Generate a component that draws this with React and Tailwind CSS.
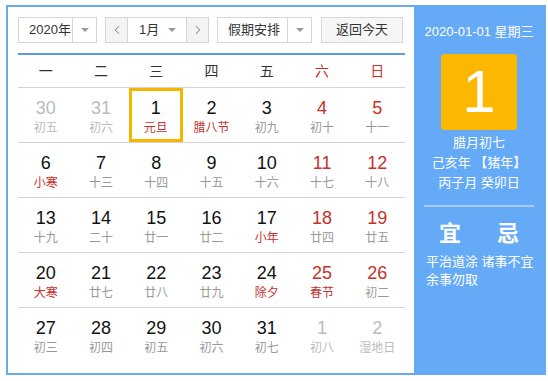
import { ChevronLeft, ChevronRight } from 'lucide-react';

const weeks = [
  [
    { d: 30, l: '初五', other: true },
    { d: 31, l: '初六', other: true },
    { d: 1, l: '元旦', fest: true, sel: true },
    { d: 2, l: '腊八节', fest: true },
    { d: 3, l: '初九' },
    { d: 4, l: '初十' },
    { d: 5, l: '十一' },
  ],
  [
    { d: 6, l: '小寒', fest: true },
    { d: 7, l: '十三' },
    { d: 8, l: '十四' },
    { d: 9, l: '十五' },
    { d: 10, l: '十六' },
    { d: 11, l: '十七' },
    { d: 12, l: '十八' },
  ],
  [
    { d: 13, l: '十九' },
    { d: 14, l: '二十' },
    { d: 15, l: '廿一' },
    { d: 16, l: '廿二' },
    { d: 17, l: '小年', fest: true },
    { d: 18, l: '廿四' },
    { d: 19, l: '廿五' },
  ],
  [
    { d: 20, l: '大寒', fest: true },
    { d: 21, l: '廿七' },
    { d: 22, l: '廿八' },
    { d: 23, l: '廿九' },
    { d: 24, l: '除夕', fest: true },
    { d: 25, l: '春节', fest: true },
    { d: 26, l: '初二' },
  ],
  [
    { d: 27, l: '初三' },
    { d: 28, l: '初四' },
    { d: 29, l: '初五' },
    { d: 30, l: '初六' },
    { d: 31, l: '初七' },
    { d: 1, l: '初八', other: true },
    { d: 2, l: '湿地日', other: true },
  ],
];

const weekdays = ['一', '二', '三', '四', '五', '六', '日'];

function Caret() {
  return (
    <span className="w-0 h-0 border-l-[4px] border-r-[4px] border-t-[4px] border-l-transparent border-r-transparent border-t-[#999]"></span>
  );
}

function DayCell({ day, col }) {
  const weekend = col >= 5;
  let numColor = 'text-[#111]';
  if (day.other) numColor = 'text-[#bbb]';
  else if (weekend) numColor = 'text-[#c9302c]';

  let lunarColor = 'text-[#999]';
  if (day.other) lunarColor = 'text-[#bbb]';
  else if (day.fest) lunarColor = 'text-[#c9302c]';

  return (
    <div
      className={
        'h-[54px] flex flex-col items-center ' +
        (day.sel ? 'border-[3px] border-[#f7b500] pt-[6px] mr-[1px]' : 'pt-[9px]')
      }
    >
      <span className={'text-[18px] leading-[22px] ' + numColor}>{day.d}</span>
      <span className={'text-[12px] leading-[16px] mt-[1px] ' + lunarColor}>{day.l}</span>
    </div>
  );
}

export default function App() {
  return (
    <div className="font-['Liberation_Sans','Noto_Sans_CJK_SC',sans-serif] bg-white w-[548px] h-[381px] pt-[5px] pl-[6px]">
      <div className="w-[540px] h-[370px] border-2 border-[#69a9ef] flex">
        {/* 日历主体 */}
        <div className="w-[406px] pl-[10px] pr-[9px] pt-[10px]">
          <div className="flex items-center h-[26px] text-[13px] text-[#333]">
            <div className="w-[79px] h-[26px] border border-[#d6d6d6] flex items-center">
              <span className="flex-1 pl-[10px]">2020年</span>
              <span className="w-[24px] h-full border-l border-[#d6d6d6] flex items-center justify-center">
                <Caret />
              </span>
            </div>
            <div className="ml-[8px] w-[104px] h-[26px] border border-[#d6d6d6] flex items-center">
              <span className="w-[22px] h-full bg-[#f3f3f3] border-r border-[#d6d6d6] flex items-center justify-center text-[#666]">
                <ChevronLeft size={14} strokeWidth={1.5} />
              </span>
              <span className="flex-1 flex items-center pl-[11px] pr-[10px] justify-between">
                <span>1月</span>
                <Caret />
              </span>
              <span className="w-[22px] h-full bg-[#f3f3f3] border-l border-[#d6d6d6] flex items-center justify-center text-[#666]">
                <ChevronRight size={14} strokeWidth={1.5} />
              </span>
            </div>
            <div className="ml-[8px] w-[95px] h-[26px] border border-[#d6d6d6] flex items-center">
              <span className="flex-1 pl-[10px]">假期安排</span>
              <span className="w-[24px] h-full border-l border-[#d6d6d6] flex items-center justify-center">
                <Caret />
              </span>
            </div>
            <div className="ml-[9px] w-[82px] h-[26px] border border-[#d6d6d6] bg-[#f6f6f6] flex items-center justify-center">
              返回今天
            </div>
          </div>

          <div className="mt-[10px] h-[2px] bg-[#5b9be0]"></div>

          <div className="grid grid-cols-7 h-[33px] items-center border-b border-[#d4d4d4] text-[14px]">
            {weekdays.map((w, i) => (
              <span key={w} className={'text-center ' + (i >= 5 ? 'text-[#c9302c]' : 'text-[#333]')}>
                {w}
              </span>
            ))}
          </div>

          {weeks.map((week, wi) => (
            <div
              key={wi}
              className={'grid grid-cols-7 ' + (wi < weeks.length - 1 ? 'border-b border-[#d4d4d4]' : '')}
            >
              {week.map((day, ci) => (
                <DayCell key={ci} day={day} col={ci} />
              ))}
            </div>
          ))}
        </div>

        {/* 右侧详情 */}
        <div className="w-[130px] bg-[#64aaf7] text-white flex flex-col items-center">
          <div className="mt-[16px] text-[13px] leading-[18px]">2020-01-01 星期三</div>
          <div className="mt-[13px] w-[76px] h-[76px] rounded-[3px] bg-[#fcb800] flex items-center justify-center">
            <span className="text-[60px] leading-none">1</span>
          </div>
          <div className="mt-[3px] text-[13px] leading-[20px] text-center">
            <div>腊月初七</div>
            <div>己亥年 【猪年】</div>
            <div>丙子月 癸卯日</div>
          </div>
          <div className="mt-[12px] w-[110px] h-[2px] bg-[#a4cdfa]"></div>
          <div className="mt-[12px] flex gap-[36px] text-[22px] leading-[30px] font-bold">
            <span>宜</span>
            <span>忌</span>
          </div>
          <div className="self-start pl-[12px] pr-[6px] text-[13px] leading-[18px] mt-[4px]">
            平治道涂 诸事不宜 余事勿取
          </div>
        </div>
      </div>
    </div>
  );
}
